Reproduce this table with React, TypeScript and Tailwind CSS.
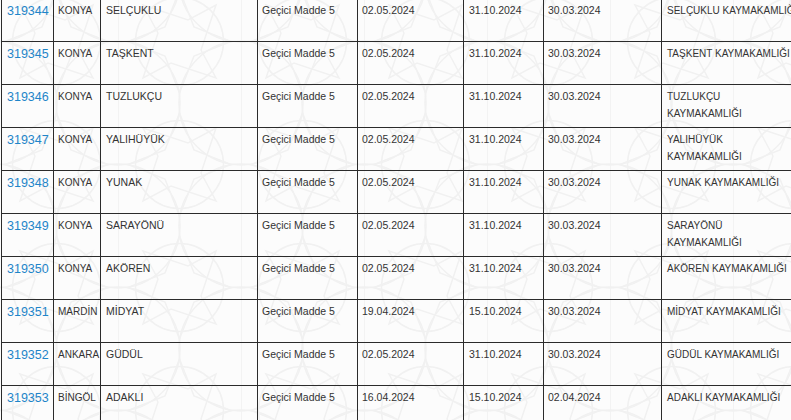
const rows = [
  { id: "319344", il: "KONYA", ilce: "SELÇUKLU", bas: "02.05.2024", bit: "31.10.2024", son: "30.03.2024", kurum: ["SELÇUKLU KAYMAKAMLIĞI"] },
  { id: "319345", il: "KONYA", ilce: "TAŞKENT", bas: "02.05.2024", bit: "31.10.2024", son: "30.03.2024", kurum: ["TAŞKENT KAYMAKAMLIĞI"] },
  { id: "319346", il: "KONYA", ilce: "TUZLUKÇU", bas: "02.05.2024", bit: "31.10.2024", son: "30.03.2024", kurum: ["TUZLUKÇU", "KAYMAKAMLIĞI"] },
  { id: "319347", il: "KONYA", ilce: "YALIHÜYÜK", bas: "02.05.2024", bit: "31.10.2024", son: "30.03.2024", kurum: ["YALIHÜYÜK", "KAYMAKAMLIĞI"] },
  { id: "319348", il: "KONYA", ilce: "YUNAK", bas: "02.05.2024", bit: "31.10.2024", son: "30.03.2024", kurum: ["YUNAK KAYMAKAMLIĞI"] },
  { id: "319349", il: "KONYA", ilce: "SARAYÖNÜ", bas: "02.05.2024", bit: "31.10.2024", son: "30.03.2024", kurum: ["SARAYÖNÜ", "KAYMAKAMLIĞI"] },
  { id: "319350", il: "KONYA", ilce: "AKÖREN", bas: "02.05.2024", bit: "31.10.2024", son: "30.03.2024", kurum: ["AKÖREN KAYMAKAMLIĞI"] },
  { id: "319351", il: "MARDİN", ilce: "MİDYAT", bas: "19.04.2024", bit: "15.10.2024", son: "30.03.2024", kurum: ["MİDYAT KAYMAKAMLIĞI"] },
  { id: "319352", il: "ANKARA", ilce: "GÜDÜL", bas: "02.05.2024", bit: "31.10.2024", son: "30.03.2024", kurum: ["GÜDÜL KAYMAKAMLIĞI"] },
  { id: "319353", il: "BİNGÖL", ilce: "ADAKLI", bas: "16.04.2024", bit: "15.10.2024", son: "02.04.2024", kurum: ["ADAKLI KAYMAKAMLIĞI"] },
];

function Pattern() {
  return (
    <svg className="absolute inset-0 h-full w-full" aria-hidden="true">
      <defs>
        <pattern id="motif" width="123" height="123" patternUnits="userSpaceOnUse" x="-5" y="-20">
          <g fill="none" stroke="#f1f1f1" strokeWidth="1.5">
            <line x1="0" y1="0" x2="0" y2="123" />
            <circle cx="0" cy="0" r="62" />
            <circle cx="123" cy="0" r="62" />
            <circle cx="0" cy="123" r="62" />
            <circle cx="123" cy="123" r="62" />
            <circle cx="61.5" cy="61.5" r="44" />
            <path d="M61.5 10 L76 47 L113 61.5 L76 76 L61.5 113 L47 76 L10 61.5 L47 47 Z" />
            <path d="M25 25 L70 40 L98 25 L83 70 L98 98 L53 83 L25 98 L40 53 Z" />
          </g>
        </pattern>
      </defs>
      <rect width="100%" height="100%" fill="url(#motif)" />
    </svg>
  );
}

export default function App() {
  return (
    <div className="relative h-[420px] w-[791px] overflow-hidden bg-[#fcfcfc] text-[#333]" style={{ fontFamily: '"Liberation Sans", Arial, sans-serif' }}>
      <Pattern />
      <div className="relative -mt-[2px] ml-px">
        <table className="w-[800px] table-fixed border-collapse text-[10.5px] leading-[17px]">
          <colgroup>
            <col className="w-[52px]" />
            <col className="w-[47px]" />
            <col className="w-[157px]" />
            <col className="w-[100px]" />
            <col className="w-[106px]" />
            <col className="w-[80px]" />
            <col className="w-[118px]" />
            <col className="w-[140px]" />
          </colgroup>
          <tbody>
            {rows.map((r) => (
              <tr key={r.id} className="h-[43px]">
                <td className="border border-[#2b2b2b] px-[5px] pt-[4px] align-top text-[12.5px] text-[#1f85c9]">{r.id}</td>
                <td className="border border-[#2b2b2b] px-[4px] pt-[3px] align-top whitespace-nowrap text-[10px]">{r.il}</td>
                <td className="border border-[#2b2b2b] px-[5px] pt-[3px] align-top">{r.ilce}</td>
                <td className="border border-[#2b2b2b] px-[4px] pt-[3px] align-top">Geçici Madde 5</td>
                <td className="border border-[#2b2b2b] px-[4px] pt-[3px] align-top">{r.bas}</td>
                <td className="border border-[#2b2b2b] px-[5px] pt-[3px] align-top">{r.bit}</td>
                <td className="border border-[#2b2b2b] px-[4px] pt-[3px] align-top">{r.son}</td>
                <td className="border border-[#2b2b2b] px-[5px] pt-[3px] align-top whitespace-nowrap text-[10px]">
                  {r.kurum.map((k) => (
                    <div key={k}>{k}</div>
                  ))}
                </td>
              </tr>
            ))}
          </tbody>
        </table>
      </div>
    </div>
  );
}
